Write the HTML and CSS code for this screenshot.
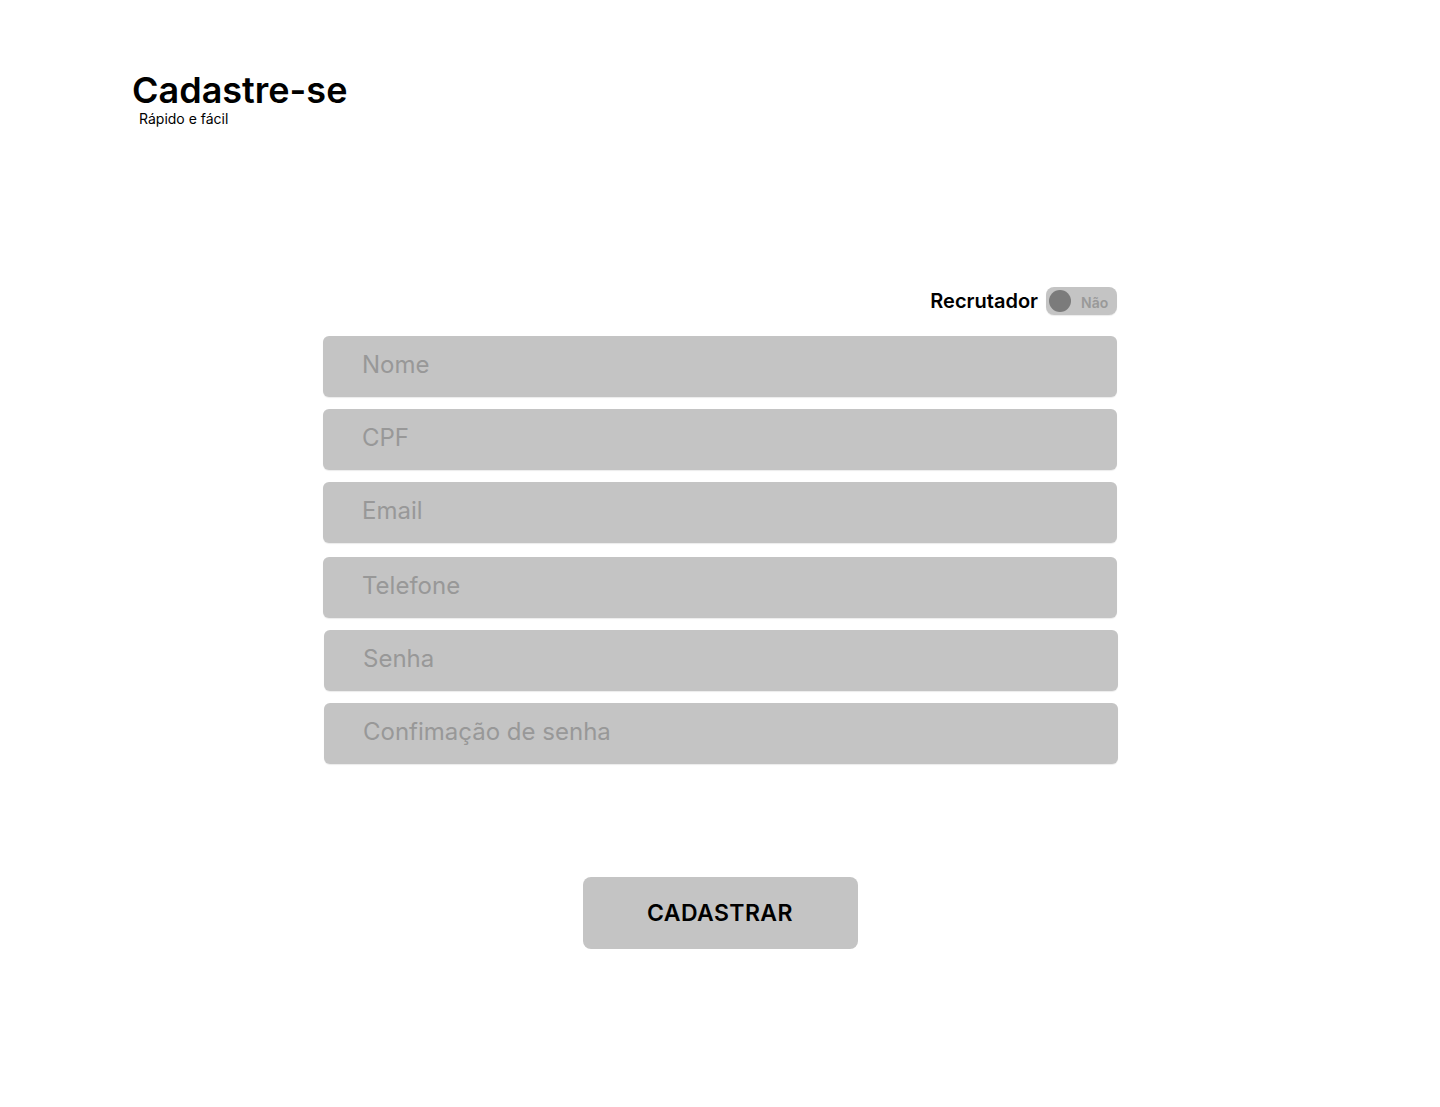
FILE: index.html
```html
<!DOCTYPE html>
<html lang="pt-BR">
<head>
<meta charset="utf-8">
<title>Cadastre-se</title>
<link rel="stylesheet" href="styles.css">
</head>
<body>
<header class="header">
  <h1 class="title">Cadastre-se</h1>
  <p class="subtitle">Rápido e fácil</p>
</header>
<main class="form-wrap">
  <form class="form">
    <div class="toggle-row">
      <span class="toggle-label">Recrutador</span>
      <span class="toggle"><span class="knob"></span><span class="toggle-text">Não</span></span>
    </div>
    <div class="fields">
      <div class="field">Nome</div>
      <div class="field">CPF</div>
      <div class="field">Email</div>
      <div class="field field--sp">Telefone</div>
      <div class="field field--shift">Senha</div>
      <div class="field field--shift">Confimação de senha</div>
    </div>
    <div class="actions">
      <button type="button" class="btn">CADASTRAR</button>
    </div>
  </form>
</main>
</body>
</html>
```
FILE: styles.css
```css
* { box-sizing: border-box; }
body {
  margin: 0;
  background: #fff;
  font-family: Inter, "Noto Sans", sans-serif;
  color: #000;
}
.header {
  padding: 68px 0 0 132px;
}
.title {
  margin: 0;
  font-size: 36px;
  font-weight: 600;
  line-height: 44px;
}
.subtitle {
  margin: -2px 0 0 7px;
  font-size: 14px;
  line-height: 17px;
}
.form-wrap {
  display: flex;
  justify-content: center;
  padding-top: 160px;
}
.form {
  width: 794px;
  display: flex;
  flex-direction: column;
}
.toggle-row {
  display: flex;
  justify-content: flex-end;
  align-items: center;
  gap: 8px;
  height: 28px;
}
.toggle-label {
  font-size: 20px;
  font-weight: 600;
}
.toggle {
  width: 71px;
  height: 28px;
  border-radius: 8px;
  background: #c4c4c4;
  display: flex;
  align-items: center;
  padding-left: 3px;
  box-shadow: 0 1px 1px rgba(0,0,0,0.08);
}
.knob {
  width: 22px;
  height: 22px;
  border-radius: 50%;
  background: #7b7b7b;
}
.toggle-text {
  margin-left: 10px;
  margin-top: 3px;
  font-size: 14px;
  font-weight: 600;
  color: #999;
}
.fields {
  display: flex;
  flex-direction: column;
  gap: 12px;
  margin-top: 21px;
}
.field {
  height: 61px;
  border-radius: 6px;
  background: #c4c4c4;
  box-shadow: 0 1px 1px rgba(0,0,0,0.08);
  display: flex;
  align-items: center;
  padding: 0 0 4px 39px;
  font-size: 24px;
  color: #989898;
}
.field--sp { margin-top: 2px; }
.field--shift { margin-left: 1px; margin-right: -1px; }
.actions {
  display: flex;
  justify-content: center;
  margin-top: 113px;
}
.btn {
  width: 275px;
  height: 72px;
  border: 0;
  border-radius: 8px;
  background: #c4c4c4;
  font-family: Inter, "Noto Sans", sans-serif;
  font-size: 23px;
  font-weight: 600;
  color: #000;
  letter-spacing: 0.4px;
  cursor: pointer;
}
```
